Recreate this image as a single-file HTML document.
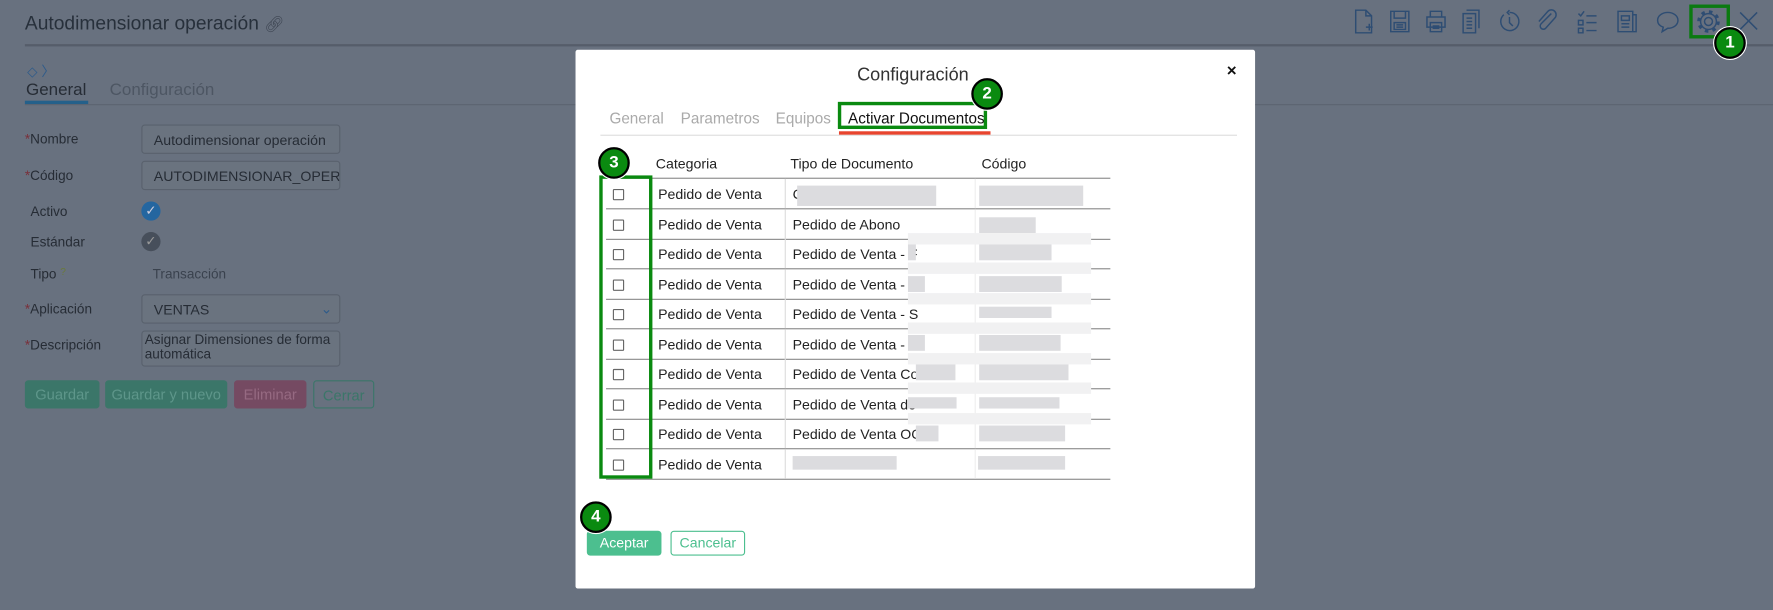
<!DOCTYPE html>
<html><head><meta charset="utf-8"><style>
*{box-sizing:border-box;margin:0;padding:0}
html,body{width:1773px;height:610px;overflow:hidden;background:#68717f}
#w{position:absolute;left:0;top:0;width:1568px;height:539px;transform:scale(1.1307,1.1317);transform-origin:0 0;font-family:"Liberation Sans",sans-serif;background:#68717f}
.a{position:absolute;white-space:nowrap}
.lbl{font-size:12px;color:#262c35}
.inp{position:absolute;left:125px;width:176px;height:26px;border:1px solid #59616d;border-radius:3px;background:#6a737f;font-size:12.5px;color:#262c35;padding:6px 10px;white-space:nowrap;overflow:hidden}
.btn{position:absolute;top:336px;height:25px;border-radius:3px;font-size:13px;text-align:center;line-height:25px}
.ic{position:absolute;top:8px;stroke:#2e4d73;fill:none;stroke-width:1.3}
.badge{position:absolute;width:28px;height:28px;border-radius:50%;background:#0a8a10;border:2px solid #000;box-shadow:0 0 0 1px #fff;color:#fff;font-weight:bold;font-size:15px;text-align:center;line-height:24px}
.row{position:absolute;left:536px;width:446px;height:27px;border-bottom:1px solid #8a8a8a;font-size:12.5px;color:#222}
.row .cb{position:absolute;left:6px;top:9px;width:10px;height:10px;border:1px solid #666;border-radius:1px}
.row .c1{position:absolute;left:46px;top:7px}
.row .c2{position:absolute;left:165px;top:7px}
.row .d1{position:absolute;left:158px;top:0;height:26px;border-left:1px solid #ddd}
.row .d2{position:absolute;left:326px;top:0;height:26px;border-left:1px solid #eee}
.bl{position:absolute;background:#dcdcdf}
.bl2{position:absolute;background:#f1f1f2}
</style></head><body><div id="w">
<div class="a" style="left:22px;top:11px;font-size:17px;color:#27303b">Autodimensionar operación <span style="color:#3d4552;font-size:14px">&#x1F517;&#xFE0E;</span></div>
<div class="a" style="left:22px;top:39px;width:1546px;height:2px;background:#555d6a"></div>
<div class="a" style="left:24px;top:54px;font-size:12px;color:#2e5b8a">&#9671; &#x232A;</div>
<div class="a" style="left:23px;top:71px;font-size:15px;color:#262c35">General</div>
<div class="a" style="left:22px;top:89px;width:56px;height:3px;background:#24608a"></div>
<div class="a" style="left:97px;top:71px;font-size:15px;color:#4d5663">Configuración</div>
<div class="a" style="left:22px;top:92px;width:1546px;height:1px;background:#5c6471"></div>
<div class="a lbl" style="left:22px;top:116px"><span style="color:#7a2f3a">*</span>Nombre</div>
<div class="a lbl" style="left:22px;top:148px"><span style="color:#7a2f3a">*</span>Código</div>
<div class="a lbl" style="left:27px;top:180px">Activo</div>
<div class="a lbl" style="left:27px;top:207px">Estándar</div>
<div class="a lbl" style="left:27px;top:235px">Tipo <span style="color:#6a7a3a;font-size:9px;vertical-align:top">?</span></div>
<div class="a lbl" style="left:22px;top:266px"><span style="color:#7a2f3a">*</span>Aplicación</div>
<div class="a lbl" style="left:22px;top:298px"><span style="color:#7a2f3a">*</span>Descripción</div>
<div class="inp" style="top:110px">Autodimensionar operación</div>
<div class="inp" style="top:142px">AUTODIMENSIONAR_OPERA</div>
<div class="a" style="left:125px;top:178px;width:17px;height:17px;border-radius:50%;background:#2466a0;color:#ccd;font-size:12px;text-align:center;line-height:17px">✓</div>
<div class="a" style="left:125px;top:205px;width:17px;height:17px;border-radius:50%;background:#474f5b;color:#999;font-size:12px;text-align:center;line-height:17px">✓</div>
<div class="a lbl" style="left:135px;top:235px;color:#3a424e">Transacción</div>
<div class="inp" style="top:260px">VENTAS<span style="position:absolute;right:6px;top:4px;color:#2e5b8a">⌄</span></div>
<div class="inp" style="top:292px;height:32px;padding:1px 2px;line-height:13px;font-size:12px;white-space:normal">Asignar Dimensiones de forma automática</div>
<div class="btn" style="left:22px;width:66px;background:#3b7669;color:#5e968a">Guardar</div>
<div class="btn" style="left:93px;width:108px;background:#3b7669;color:#5e968a">Guardar y nuevo</div>
<div class="btn" style="left:207px;width:64px;background:#754a62;color:#966a82">Eliminar</div>
<div class="btn" style="left:277px;width:54px;border:1px solid #3b7669;color:#3b7669">Cerrar</div>
<!-- toolbar -->
<svg class="ic" style="left:1196px" width="20" height="22"><path d="M3 1h9l5 5v15H3z M12 1v5h5 M12 16h6 M15 13v6"/></svg>
<svg class="ic" style="left:1228px" width="20" height="22"><path d="M2 2h16v18H2z M5 2v6h10V2 M5 12h10v6H5z M7 14h6 M7 16h6"/></svg>
<svg class="ic" style="left:1260px" width="20" height="22"><path d="M5 2h10v5H5z M2 7h16v9H2z M5 12h10v8H5z M7 15h6 M7 17h6"/></svg>
<svg class="ic" style="left:1292px" width="20" height="22"><path d="M5 1h11v16 M2 4h11v17H2z M5 8h5 M5 11h5 M5 14h5 M5 17h5"/></svg>
<svg class="ic" style="left:1324px" width="20" height="22"><path d="M6 5a8 8 0 1 0 5-2 M11 1l-2 2 2 2 M11 7v5l3 3"/></svg>
<svg class="ic" style="left:1358px" width="20" height="22"><path d="M14 4l-9 9a2.5 2.5 0 0 0 4 4l8-9a4 4 0 0 0-6-6l-8 9"/></svg>
<svg class="ic" style="left:1394px" width="20" height="22"><path d="M2 4l2 2 3-4 M2 10h4v4H2z M2 17h4v4H2z M9 6h9 M9 12h9 M9 19h9"/></svg>
<svg class="ic" style="left:1429px" width="20" height="22"><path d="M2 2h13v18H2z M15 5h3v15h-3 M5 6h7v4H5z M5 13h7 M5 16h7"/></svg>
<svg class="ic" style="left:1464px" width="22" height="22"><path d="M11 3c5 0 9 3 9 7s-4 7-9 7l-5 3 1-4c-3-1-5-3-5-6 0-4 4-7 9-7z"/></svg>
<svg class="ic" style="left:1500px" width="22" height="22"><circle cx="11" cy="11" r="3.5"/><circle cx="11" cy="11" r="7"/><circle cx="11" cy="11" r="8.5" stroke-width="3" stroke-dasharray="3 3.7"/></svg>
<svg class="ic" style="left:1537px" width="20" height="22"><path d="M2 3l15 15 M17 3L2 18"/></svg>
<div class="a" style="left:1494px;top:4px;width:36px;height:30px;border:3px solid #0a7a10"></div>
<div class="badge" style="left:1516px;top:24px">1</div>
<!-- modal -->
<div class="a" style="left:509px;top:44px;width:601px;height:476px;background:#fff;border-radius:2px"></div>
<div class="a" style="left:758px;top:58px;font-size:16px;color:#333">Configuración</div>
<div class="a" style="left:1085px;top:54px;font-size:15px;color:#111;font-weight:bold">×</div>
<div class="a" style="left:539px;top:97px;font-size:13.5px;color:#aaa">General</div>
<div class="a" style="left:602px;top:97px;font-size:13.5px;color:#aaa">Parametros</div>
<div class="a" style="left:686px;top:97px;font-size:13.5px;color:#aaa">Equipos</div>
<div class="a" style="left:750px;top:97px;font-size:13.5px;color:#111">Activar Documentos</div>
<div class="a" style="left:531px;top:119px;width:563px;height:1px;background:#ddd"></div>
<div class="a" style="left:742px;top:116px;width:134px;height:3px;background:#e8442e"></div>
<div class="a" style="left:741px;top:90px;width:132px;height:24px;border:3px solid #0a8a10"></div>
<div class="badge" style="left:859px;top:69px">2</div>
<div class="a" style="left:580px;top:138px;font-size:12.5px;color:#222">Categoria</div>
<div class="a" style="left:699px;top:138px;font-size:12.5px;color:#222">Tipo de Documento</div>
<div class="a" style="left:868px;top:138px;font-size:12.5px;color:#222">Código</div>
<div class="a" style="left:536px;top:157px;width:446px;height:1px;background:#8a8a8a"></div>
<div class="row" style="top:158px"><div class="cb"></div><div class="c1">Pedido de Venta</div><div class="d1"></div><div class="d2"></div><div class="c2">C</div></div>
<div class="row" style="top:185px"><div class="cb"></div><div class="c1">Pedido de Venta</div><div class="d1"></div><div class="d2"></div><div class="c2">Pedido de Abono</div></div>
<div class="row" style="top:211px"><div class="cb"></div><div class="c1">Pedido de Venta</div><div class="d1"></div><div class="d2"></div><div class="c2">Pedido de Venta - F</div></div>
<div class="row" style="top:238px"><div class="cb"></div><div class="c1">Pedido de Venta</div><div class="d1"></div><div class="d2"></div><div class="c2">Pedido de Venta - M</div></div>
<div class="row" style="top:264px"><div class="cb"></div><div class="c1">Pedido de Venta</div><div class="d1"></div><div class="d2"></div><div class="c2">Pedido de Venta - S</div></div>
<div class="row" style="top:291px"><div class="cb"></div><div class="c1">Pedido de Venta</div><div class="d1"></div><div class="d2"></div><div class="c2">Pedido de Venta - S</div></div>
<div class="row" style="top:317px"><div class="cb"></div><div class="c1">Pedido de Venta</div><div class="d1"></div><div class="d2"></div><div class="c2">Pedido de Venta Co</div></div>
<div class="row" style="top:344px"><div class="cb"></div><div class="c1">Pedido de Venta</div><div class="d1"></div><div class="d2"></div><div class="c2">Pedido de Venta de</div></div>
<div class="row" style="top:370px"><div class="cb"></div><div class="c1">Pedido de Venta</div><div class="d1"></div><div class="d2"></div><div class="c2">Pedido de Venta OC</div></div>
<div class="row" style="top:397px"><div class="cb"></div><div class="c1">Pedido de Venta</div><div class="d1"></div><div class="d2"></div></div>
<!-- blur blocks -->
<div class="bl" style="left:705px;top:164px;width:123px;height:18px"></div>
<div class="bl" style="left:866px;top:164px;width:92px;height:18px"></div>
<div class="bl" style="left:866px;top:192px;width:50px;height:14px"></div>
<div class="bl2" style="left:803px;top:206px;width:162px;height:10px"></div>
<div class="bl2" style="left:803px;top:232px;width:162px;height:10px"></div>
<div class="bl2" style="left:803px;top:259px;width:162px;height:10px"></div>
<div class="bl2" style="left:803px;top:285px;width:162px;height:10px"></div>
<div class="bl2" style="left:803px;top:312px;width:162px;height:10px"></div>
<div class="bl2" style="left:803px;top:338px;width:162px;height:10px"></div>
<div class="bl2" style="left:803px;top:365px;width:162px;height:10px"></div>
<div class="bl" style="left:866px;top:216px;width:64px;height:14px"></div>
<div class="bl" style="left:803px;top:216px;width:7px;height:14px"></div>
<div class="bl" style="left:866px;top:244px;width:73px;height:14px"></div>
<div class="bl" style="left:803px;top:244px;width:15px;height:14px"></div>
<div class="bl" style="left:866px;top:271px;width:64px;height:10px"></div>
<div class="bl" style="left:866px;top:296px;width:72px;height:14px"></div>
<div class="bl" style="left:803px;top:296px;width:15px;height:14px"></div>
<div class="bl" style="left:866px;top:322px;width:79px;height:14px"></div>
<div class="bl" style="left:810px;top:322px;width:35px;height:14px"></div>
<div class="bl" style="left:866px;top:351px;width:71px;height:10px"></div>
<div class="bl" style="left:803px;top:351px;width:43px;height:10px"></div>
<div class="bl" style="left:866px;top:376px;width:76px;height:14px"></div>
<div class="bl" style="left:810px;top:376px;width:20px;height:14px"></div>
<div class="bl" style="left:701px;top:403px;width:92px;height:12px"></div>
<div class="bl" style="left:865px;top:403px;width:77px;height:12px"></div>
<div class="a" style="left:530px;top:155px;width:47px;height:268px;border:3px solid #0a8a10"></div>
<div class="badge" style="left:529px;top:130px">3</div>
<div class="a" style="left:519px;top:469px;width:66px;height:22px;background:#4cbf8f;border-radius:3px;color:#fff;font-size:12.5px;text-align:center;line-height:22px">Aceptar</div>
<div class="a" style="left:593px;top:469px;width:66px;height:22px;border:1px solid #4cbf8f;border-radius:3px;color:#4cbf8f;font-size:12.5px;text-align:center;line-height:20px">Cancelar</div>
<div class="badge" style="left:513px;top:443px">4</div>
</div></body></html>
